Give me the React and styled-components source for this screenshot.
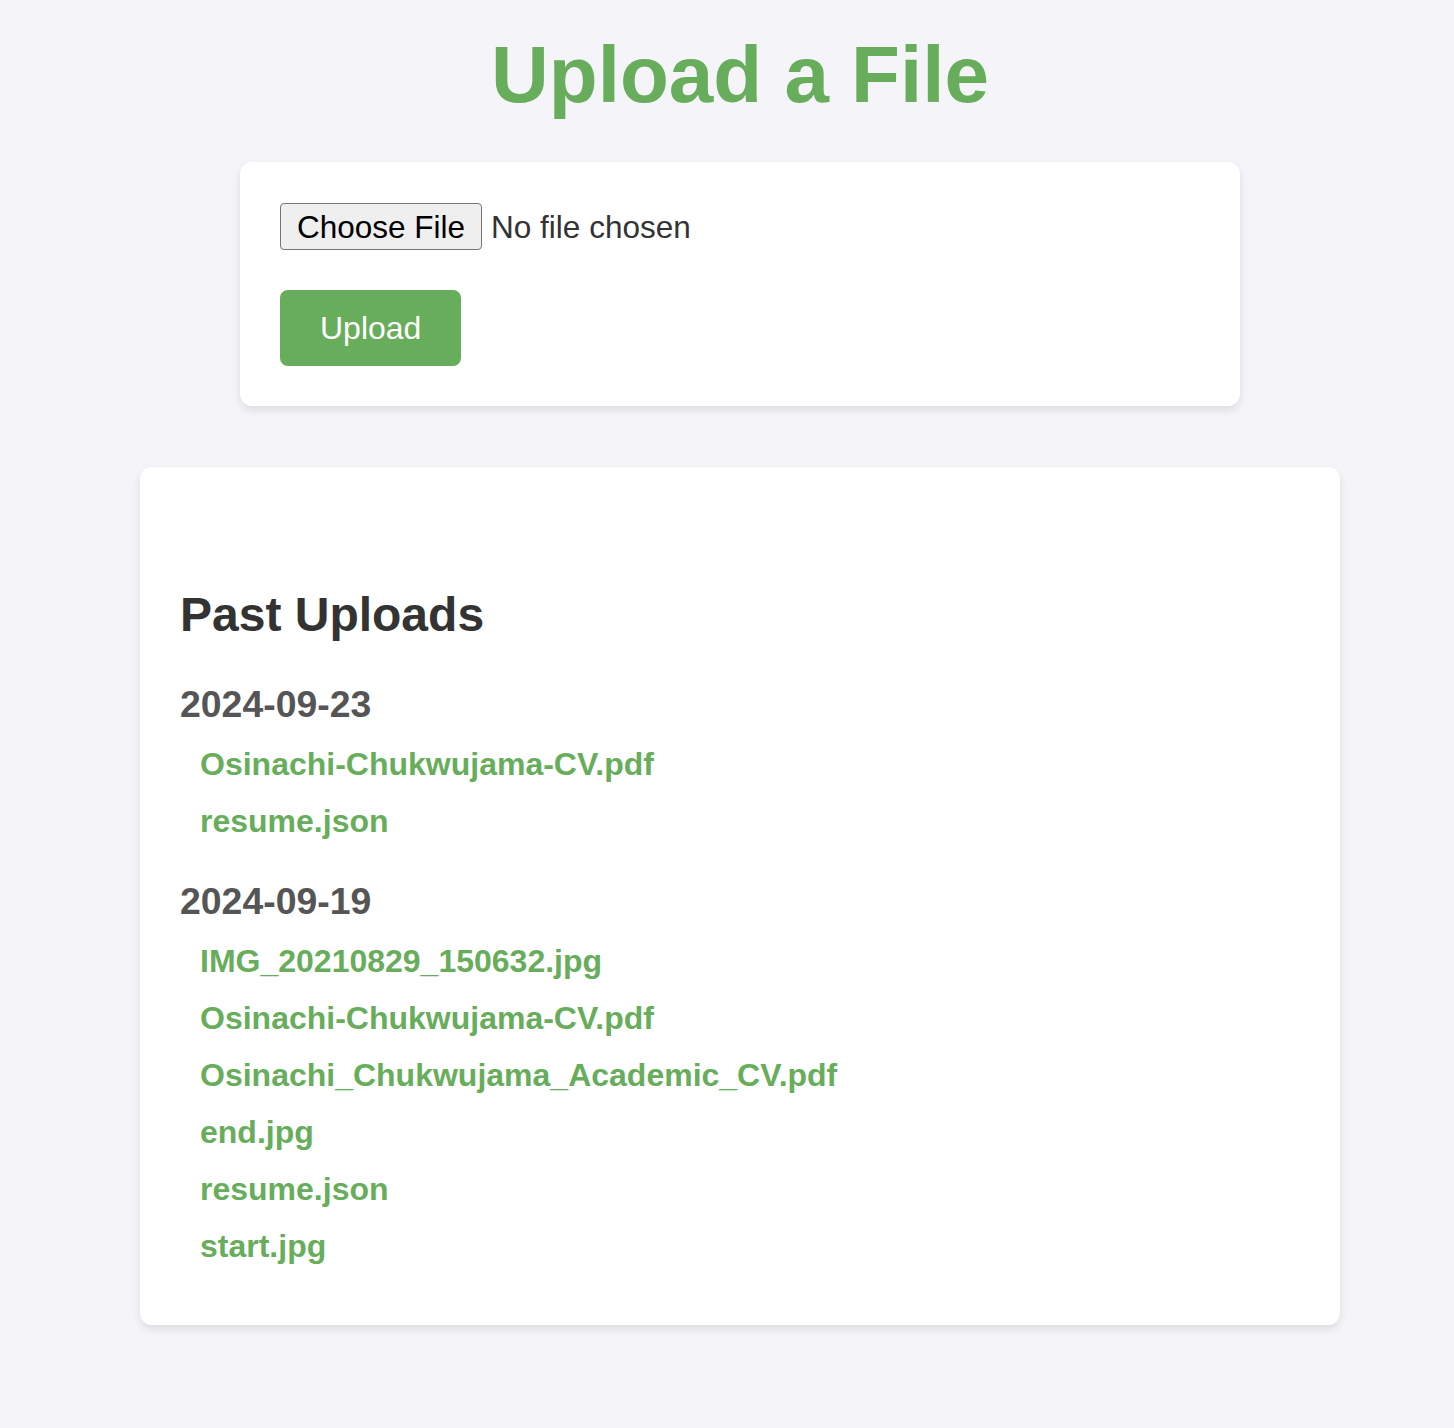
import React from 'react'
import styled, { createGlobalStyle } from 'styled-components'

const uploads = [
  {
    date: '2024-09-23',
    files: ['Osinachi-Chukwujama-CV.pdf', 'resume.json'],
  },
  {
    date: '2024-09-19',
    files: [
      'IMG_20210829_150632.jpg',
      'Osinachi-Chukwujama-CV.pdf',
      'Osinachi_Chukwujama_Academic_CV.pdf',
      'end.jpg',
      'resume.json',
      'start.jpg',
    ],
  },
]

export default function App() {
  return (
    <>
      <GlobalStyle />
      <Page>
        <Title>Upload a File</Title>
        <FormCard>
          <FileInput type="file" />
          <UploadButton type="button">Upload</UploadButton>
        </FormCard>
        <HistoryCard>
          <SectionTitle>Past Uploads</SectionTitle>
          <Groups>
            {uploads.map((group) => (
              <Group key={group.date}>
                <DateTitle>{group.date}</DateTitle>
                <FileList>
                  {group.files.map((name) => (
                    <FileItem key={name}>
                      <FileLink href="#">{name}</FileLink>
                    </FileItem>
                  ))}
                </FileList>
              </Group>
            ))}
          </Groups>
        </HistoryCard>
      </Page>
    </>
  )
}

const GlobalStyle = createGlobalStyle`
  body {
    margin: 0;
    background-color: #f4f4f9;
    font-family: "Liberation Sans", Arial, sans-serif;
    font-size: 32px;
    color: #333;
  }
`

const Page = styled.div`
  display: flex;
  flex-direction: column;
  align-items: center;
  padding: 29px 0 100px 26px;
  min-height: 1428px;
  box-sizing: border-box;
`

const Title = styled.h1`
  margin: 0 0 41px;
  font-size: 80px;
  font-weight: bold;
  line-height: 92px;
  color: #67ad5b;
`

const Card = styled.div`
  background-color: #ffffff;
  border-radius: 12px;
  box-shadow: 0 4px 8px rgba(0, 0, 0, 0.1);
  box-sizing: border-box;
`

const FormCard = styled(Card)`
  width: 1000px;
  padding: 40px;
  display: flex;
  flex-direction: column;
  align-items: flex-start;
  gap: 40px;
`

const FileInput = styled.input`
  margin: 1px 0 0;
  font-family: "Liberation Sans", Arial, sans-serif;
  font-size: 31.5px;
  color: #333;
  line-height: 37px;

  &::file-selector-button {
    font-family: "Liberation Sans", Arial, sans-serif;
    font-size: 31.5px;
    color: #000;
    background-color: #efefef;
    border: 1px solid #767676;
    border-radius: 4px;
    padding: 5px 16px 4px 16px;
    margin-right: 9px;
    line-height: 36px;
  }
`

const UploadButton = styled.button`
  background-color: #67ad5b;
  color: #ffffff;
  border: none;
  border-radius: 8px;
  padding: 20px 40px;
  font-family: "Liberation Sans", Arial, sans-serif;
  font-size: 32px;
  line-height: 36px;
  cursor: pointer;
`

const HistoryCard = styled(Card)`
  width: 1200px;
  margin-top: 61px;
  padding: 120px 40px 60px;
`

const SectionTitle = styled.h2`
  margin: 0 0 41px;
  font-size: 48px;
  font-weight: bold;
  line-height: 55px;
  color: #333;
`

const Groups = styled.div`
  display: flex;
  flex-direction: column;
  gap: 40px;
`

const Group = styled.div`
  display: flex;
  flex-direction: column;
  gap: 20px;
`

const DateTitle = styled.h3`
  margin: 0;
  font-size: 37.4px;
  font-weight: bold;
  line-height: 43px;
  color: #555;
`

const FileList = styled.ul`
  list-style: none;
  margin: 0;
  padding: 0 0 0 20px;
  display: flex;
  flex-direction: column;
  gap: 20px;
`

const FileItem = styled.li`
  line-height: 37px;
`

const FileLink = styled.a`
  color: #67ad5b;
  font-weight: bold;
  text-decoration: none;
`
